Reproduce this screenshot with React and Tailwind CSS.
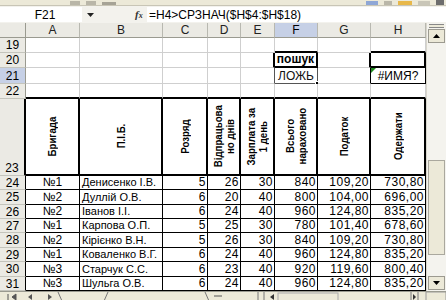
import React from "react";

const FONT = "font-['Liberation_Sans',Arial,sans-serif]";
const GRID = "border-[#cfcfcf]";

const data = [
  ["№1", "Денисенко І.В.", "5", "26", "30", "840", "109,20", "730,80"],
  ["№2", "Дуллій О.В.", "6", "20", "40", "800", "104,00", "696,00"],
  ["№2", "Іванов І.І.", "6", "24", "40", "960", "124,80", "835,20"],
  ["№1", "Карпова О.П.", "5", "25", "30", "780", "101,40", "678,60"],
  ["№2", "Кірієнко В.Н.", "5", "26", "30", "840", "109,20", "730,80"],
  ["№1", "Коваленко В.Г.", "6", "24", "40", "960", "124,80", "835,20"],
  ["№3", "Старчук С.С.", "6", "23", "40", "920", "119,60", "800,40"],
  ["№3", "Шульга О.В.", "6", "24", "40", "960", "124,80", "835,20"],
];

const letters = ["A", "B", "C", "D", "E", "F", "G", "H"];

function ColHead({ children, sel }) {
  return (
    <div
      className={`flex items-center justify-center border-r border-b border-r-[#b8b8b0] border-b-[#9a9a90] text-[12px] leading-none ${
        sel ? "bg-[#c6d0e6] text-black" : "bg-[#ebeae4] text-[#222]"
      }`}
    >
      {children}
    </div>
  );
}

function RowHead({ children, sel, extra = "border-r-[#9a9a90]" }) {
  return (
    <div
      className={`flex items-center justify-center border-r border-b border-b-[#c4c4bc] text-[12px] leading-none ${extra} ${
        sel ? "bg-[#c6d0e6]" : "bg-[#ebeae4]"
      }`}
    >
      {children}
    </div>
  );
}

function Cell({ children, className = "", size = "text-[12px]" }) {
  return (
    <div className={`relative flex items-end overflow-visible whitespace-nowrap border-r border-b leading-[13px] bg-white ${size} ${className}`}>
      {children}
    </div>
  );
}

function Vert({ lines }) {
  return (
    <div className="flex h-full w-full items-center justify-center">
      <div className="rotate-180 scale-y-[0.88] text-center font-bold text-[11px] leading-[12px] [writing-mode:vertical-rl]">
        {lines.map((l, i) => (
          <div key={i}>{l}</div>
        ))}
      </div>
    </div>
  );
}

export default function App() {
  const emptyRow = (n, special = {}) => (
    <React.Fragment key={n}>
      <RowHead sel={n === 21}>{n}</RowHead>
      {letters.map((L) =>
        special[L] ? (
          <React.Fragment key={L}>{special[L]}</React.Fragment>
        ) : (
          <Cell key={L} className={GRID} />
        )
      )}
    </React.Fragment>
  );

  return (
    <div className={`${FONT} flex h-[300px] w-[446px] flex-col overflow-hidden bg-[#ece9d8] text-black`}>
      {/* toolbar remnant */}
      <div className="flex h-[6px] items-end gap-[6px] border-b border-[#c8c5b6] bg-[#ece9d8] pl-[70px]">
        <div className="h-[4px] w-[10px] bg-[#b9b6a8]" />
        <div className="h-[4px] w-[10px] bg-[#b9b6a8]" />
        <div className="h-[3px] w-[14px] bg-[#a6a396]" />
        <div className="flex-1" />
        <div className="h-[4px] w-[12px] bg-[#8fa7d6]" />
        <div className="h-[4px] w-[8px] bg-[#b9b6a8]" />
        <div className="h-[4px] w-[14px] bg-[#e8b84a]" />
        <div className="h-[4px] w-[12px] bg-[#c9c6b8]" />
        <div className="mr-[2px] h-[5px] w-[8px] bg-[#6d6d6d]" />
      </div>
      {/* formula bar */}
      <div className="flex h-[17px] items-center bg-[#f3f2ed] text-[12px]">
        <div className="flex h-[15px] w-[82px] items-center justify-center bg-white pl-[8px]">F21</div>
        <div className="flex w-[16px] items-center justify-center">
          <svg width="7" height="4" viewBox="0 0 7 4">
            <path d="M0 0H7L3.5 4Z" fill="#222" />
          </svg>
        </div>
        <div className="w-[37px]" />
        <div className="w-[12px] text-[11px] italic font-bold font-['Liberation_Serif',serif] text-[#333]">
          f<span className="text-[8px]">x</span>
        </div>
        <div className="flex h-[15px] flex-1 items-center bg-white pl-[2px]">=H4&gt;СРЗНАЧ($H$4:$H$18)</div>
      </div>

      {/* main */}
      <div className="flex h-[268px]">
        <div className="grid w-[426px] grid-cols-[26px_54px_83px_45px_33px_34px_43px_53px_55px] grid-rows-[15px_15px_15px_16px_15px_77px_14px_15px_14px_14px_15px_14px_15px_14px] bg-white">
          {/* column headers */}
          <div className="border-r border-b border-r-[#9a9a90] border-b-[#9a9a90] bg-[#ebeae4]" />
          {letters.map((L) => (
            <ColHead key={L} sel={L === "F"}>
              {L}
            </ColHead>
          ))}

          {emptyRow(19, {
            F: <Cell className={`${GRID} border-b-2 border-b-black`} />,
            H: <Cell className={`${GRID} border-b-2 border-b-black`} />,
          })}
          {emptyRow(20, {
            E: <Cell className={`${GRID} border-r-2 border-r-black`} />,
            F: (
              <Cell className="justify-center border-r-2 border-b-2 border-black font-bold">пошук</Cell>
            ),
            G: <Cell className={`${GRID} border-r-2 border-r-black`} />,
            H: <Cell className="border-r-2 border-b-2 border-black" />,
          })}
          {emptyRow(21, {
            E: <Cell className={`${GRID} border-r-[#555]`} />,
            F: (
              <Cell className="justify-center border-r border-b border-[#555] text-[#111]">
                ЛОЖЬ
                <span className="absolute -bottom-[3px] -right-[3px] h-[5px] w-[5px] border border-white bg-black" />
              </Cell>
            ),
            G: <Cell className={`${GRID} border-r-black`} />,
            H: (
              <Cell className="justify-center border-r border-b border-black">
                <span className="absolute left-0 top-0 h-0 w-0 border-t-[5px] border-r-[5px] border-t-[#1f8a1f] border-r-transparent" />
                #ИМЯ?
              </Cell>
            ),
          })}
          {emptyRow(22, Object.fromEntries(letters.map((L) => [L, <Cell className={`${GRID} border-b-2 border-b-black`} />])))}

          {/* header row 23 */}
          <RowHead extra="border-r-2 border-r-black">
            <span className="self-end pb-[1px]">23</span>
          </RowHead>
          {[
            ["Бригада"],
            ["П.І.Б."],
            ["Розряд"],
            ["Відпрацьова", "но днів"],
            ["Зарплата за", "1 день"],
            ["Всього", "нараховано"],
            ["Податок"],
            ["Одержати"],
          ].map((lines, i) => (
            <Cell key={i} className="border-r-2 border-b-2 border-black">
              <Vert lines={lines} />
            </Cell>
          ))}

          {data.map((r, ri) => (
            <React.Fragment key={ri}>
              <RowHead extra="border-r-black">{24 + ri}</RowHead>
              {r.map((v, ci) => (
                <Cell
                  key={ci}
                  size={ci === 1 ? "text-[11px]" : "text-[12px]"}
                  className={`border-black ${
                    ci === 0
                      ? "justify-center"
                      : ci === 1
                      ? "justify-start pl-[2px]"
                      : "justify-end pr-[1px] tracking-[0.5px]"
                  }`}
                >
                  {v}
                </Cell>
              ))}
            </React.Fragment>
          ))}
        </div>

        {/* vertical scrollbar */}
        <div className="flex w-[20px] flex-col border-l border-[#d8d6cc] bg-[#f4f3ee]">
          <div className="mx-[2px] mt-[1px] h-[4px] border-y border-[#888] bg-[#ece9d8]" />
          <div className="mx-[1px] mt-[1px] flex h-[14px] items-center justify-center border border-[#9c9a90] bg-[#ece9d8]">
            <svg width="7" height="4" viewBox="0 0 7 4">
              <path d="M0 4H7L3.5 0Z" fill="#000" />
            </svg>
          </div>
          <div className="h-[117px]" />
          <div className="mx-[1px] h-[95px] border border-[#aaa89e] bg-[#ece9d8]" />
          <div className="flex-1" />
          <div className="mx-[1px] mb-[1px] flex h-[14px] items-center justify-center border border-[#9c9a90] bg-[#ece9d8]">
            <svg width="7" height="4" viewBox="0 0 7 4">
              <path d="M0 0H7L3.5 4Z" fill="#000" />
            </svg>
          </div>
        </div>
      </div>

      {/* sheet tabs / horizontal scroll */}
      <div className="flex h-[9px] items-start border-t border-[#9a9a90] bg-[#ece9d8]">
        <svg width="446" height="9" viewBox="0 0 446 9">
          <path d="M8 2V8M12 5L16 2V8Z" fill="#555" stroke="#555" strokeWidth="1" />
          <path d="M28 5L32 2V8Z M48 2V8L52 5Z" fill="#555" />
          <path d="M58 0L62 9M108 0L104 9" stroke="#777" />
          <path d="M205 0L209 9" stroke="#777" />
          <path d="M214 4H222" stroke="#555" />
          <path d="M258 0V9M264 0V9" stroke="#777" />
          <path d="M270 5L274 2V8Z" fill="#333" />
          <rect x="278" y="1" width="60" height="8" fill="#ece9d8" stroke="#aaa" />
          <path d="M411 0V9M418 0V9" stroke="#777" />
          <path d="M413 2V8L416 5Z" fill="#333" />
          <rect x="426" y="0" width="20" height="9" fill="#ece9d8" stroke="#999" />
        </svg>
      </div>
    </div>
  );
}
